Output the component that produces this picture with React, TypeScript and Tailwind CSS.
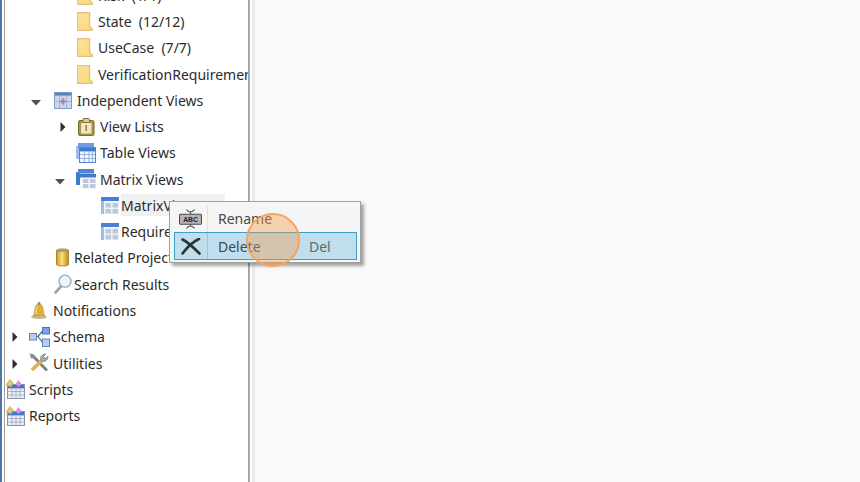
import type { ReactNode } from "react";

const FONT = "font-['Noto_Sans','Open_Sans',sans-serif]";

function Caret({ open }: { open?: boolean }) {
  return open ? (
    <svg width="10" height="6" viewBox="0 0 10 6" className="mt-[5px] shrink-0">
      <path d="M0 0H10L5 5.5Z" fill="#505050" />
    </svg>
  ) : (
    <svg width="6" height="10" viewBox="0 0 6 10" className="mt-[1px] shrink-0">
      <path d="M0.5 0L5.5 5L0.5 10Z" fill="#303030" />
    </svg>
  );
}

function Folder() {
  return (
    <svg width="16" height="19" viewBox="0 0 16 19" className="shrink-0">
      <defs>
        <linearGradient id="fold" x1="0" y1="0" x2="1" y2="1">
          <stop offset="0" stopColor="#fbe39c" />
          <stop offset="1" stopColor="#fdd876" />
        </linearGradient>
      </defs>
      <path d="M.7.7H12.6V14.5L15.3 17V18.3H.7Z" fill="url(#fold)" stroke="#e0bf86" strokeWidth="1.2" />
    </svg>
  );
}

function IndependentIcon() {
  return (
    <svg width="18" height="17" viewBox="0 0 18 17" className="shrink-0">
      <rect x=".5" y=".5" width="17" height="16" fill="#c9d8ef" stroke="#7f9dc9" />
      <rect x="1" y="1" width="16" height="2.6" fill="#5a82bf" />
      <path d="M1 9.5H17M5.5 4V16M12.5 4V16" stroke="#a1b6d8" />
      <circle cx="9" cy="9.5" r="2.4" fill="#c98a95" />
      <path d="M9 5.5V13.5M5 9.5H13" stroke="#b0717e" strokeWidth=".7" />
    </svg>
  );
}

function ViewListsIcon() {
  return (
    <svg width="17" height="18" viewBox="0 0 17 18" className="shrink-0">
      <rect x=".5" y="2.5" width="15.5" height="15" rx="1.5" fill="#a8924a" stroke="#7a6a30" />
      <rect x="3" y="5" width="10.5" height="10.5" fill="#efe8c8" />
      <rect x="5" y=".5" width="6.5" height="4" rx="1" fill="#ddd0a0" stroke="#7a6a30" />
      <path d="M8.2 7V13" stroke="#8b7331" strokeWidth="1.4" />
    </svg>
  );
}

function TableIcon() {
  return (
    <svg width="20" height="20" viewBox="0 0 20 20" className="shrink-0">
      <rect x="0" y="3" width="14" height="13" fill="#9dbcec" />
      <rect x="2" y="0" width="16" height="5" fill="#6f9ce0" />
      <rect x="3.5" y="4.5" width="16" height="15" fill="#f0f4fb" stroke="#4f86d6" />
      <rect x="4" y="5" width="15" height="3.4" fill="#3f78cf" />
      <path d="M4 11.5H19M4 15.5H19M8.5 8V19M13 8V19M16.5 8V19" stroke="#9db4dc" />
    </svg>
  );
}

function MatrixStackIcon() {
  return (
    <svg width="20" height="20" viewBox="0 0 20 20" className="shrink-0">
      <rect x="0" y="3" width="14" height="13" fill="#3f78cf" />
      <rect x="2" y="0" width="16" height="5" fill="#4d84d8" />
      <rect x="4" y="4.5" width="16" height="15.5" fill="#f4f6fa" />
      <rect x="4" y="5" width="16" height="3.5" fill="#3f78cf" />
      <rect x="7" y="10" width="5.5" height="4" fill="#bcc9dd" />
      <rect x="14" y="10" width="5.5" height="4" fill="#bcc9dd" />
      <rect x="7" y="15" width="5.5" height="4" fill="#bcc9dd" />
      <rect x="14" y="15" width="5.5" height="4" fill="#bcc9dd" />
    </svg>
  );
}

function MatrixIcon() {
  return (
    <svg width="18" height="17" viewBox="0 0 18 17" className="shrink-0">
      <rect width="18" height="17" fill="#eef2f9" />
      <rect width="18" height="4" fill="#4a80d2" />
      <rect y="4" width="3" height="13" fill="#9dbcec" />
      <rect x="4.5" y="6" width="5.5" height="4.5" fill="#bcc9dd" />
      <rect x="11.5" y="6" width="5.5" height="4.5" fill="#bcc9dd" />
      <rect x="4.5" y="12" width="5.5" height="4.5" fill="#bcc9dd" />
      <rect x="11.5" y="12" width="5.5" height="4.5" fill="#bcc9dd" />
    </svg>
  );
}

function CylinderIcon() {
  return (
    <svg width="13" height="19" viewBox="0 0 13 19" className="shrink-0">
      <defs>
        <linearGradient id="cyl" x1="0" y1="0" x2="1" y2="0">
          <stop offset="0" stopColor="#cf9a22" />
          <stop offset=".45" stopColor="#f8e07c" />
          <stop offset="1" stopColor="#c28a18" />
        </linearGradient>
      </defs>
      <path d="M.5 2.5C.5.5 12.5.5 12.5 2.5V16.5C12.5 18.5.5 18.5.5 16.5Z" fill="url(#cyl)" stroke="#b08428" />
      <ellipse cx="6.5" cy="2.4" rx="5.5" ry="1.5" fill="#a09f8c" />
    </svg>
  );
}

function SearchIcon() {
  return (
    <svg width="18" height="20" viewBox="0 0 18 20" className="shrink-0">
      <path d="M1.5 18.5L7 12.5" stroke="#a3a3a3" strokeWidth="2.6" strokeLinecap="round" />
      <circle cx="11" cy="7.2" r="6" fill="#eef6fc" stroke="#94abbd" strokeWidth="1.3" />
    </svg>
  );
}

function BellIcon() {
  return (
    <svg width="16" height="17" viewBox="0 0 16 17" className="shrink-0">
      <ellipse cx="8" cy="15" rx="8" ry="2" fill="#c8bea6" />
      <path d="M2 14C4 11.5 3.6 8.5 4 6C4.5 3.2 6 2 8 2C10 2 11.5 3.2 12 6C12.4 8.5 12 11.5 14 14Z" fill="#e4ad36" stroke="#b98a2e" strokeWidth=".6" />
      <path d="M6 4.5C5.2 6.5 5.6 9.5 4.8 12" stroke="#f6dc8c" strokeWidth="1.2" fill="none" />
      <circle cx="8" cy="1.5" r="1.4" fill="#b98a2e" />
    </svg>
  );
}

function SchemaIcon() {
  return (
    <svg width="21" height="20" viewBox="0 0 21 20" className="shrink-0">
      <path d="M7 9.5H9L14 3.5M9 9.5L14 16" stroke="#55585e" fill="none" strokeWidth="1.2" />
      <rect x=".5" y="6.5" width="7" height="6.5" fill="#b9cdeb" stroke="#5f86c2" />
      <rect x="13.5" y=".5" width="7" height="6.5" fill="#7ea3db" stroke="#3f78cf" />
      <rect x="13.5" y="12" width="7" height="7.5" fill="#b9cdeb" stroke="#5f86c2" />
    </svg>
  );
}

function ToolsIcon() {
  return (
    <svg width="20" height="20" viewBox="0 0 20 20" className="shrink-0">
      <path d="M3 2L18 17.5" stroke="#7c7f84" strokeWidth="2.8" />
      <path d="M.5.5L5 1.5L5.5 5L2 5.5Z" fill="#8d9197" />
      <path d="M16 4.5L3 17" stroke="#dcb24f" strokeWidth="3.8" />
      <path d="M11.5 6.5C11 3 14 .5 17 1L14.5 3.5L16.5 5.5L19 3C19.5 6 17 9 13.5 8.5Z" fill="#a3a9af" stroke="#6f7378" strokeWidth=".6" />
    </svg>
  );
}

function ReportIcon() {
  return (
    <svg width="19" height="20" viewBox="0 0 19 20" className="shrink-0">
      <rect x="1.5" y="5.5" width="17" height="14" fill="#eceff6" stroke="#8a93a8" />
      <rect x="2" y="6" width="16" height="3.4" fill="#3f78cf" />
      <path d="M2 12.5H18M2 16H18M6 9.4V19M10 9.4V19M14 9.4V19" stroke="#a9b2c6" />
      <path d="M0 6L4 0.5L7.5 4L5 8Z" fill="#e8c860" stroke="#b09545" strokeWidth=".5" />
      <path d="M9.5 5L12.5 1L15.5 5L12.5 8Z" fill="#e58be0" />
    </svg>
  );
}

function RenameIcon() {
  return (
    <svg width="23" height="22" viewBox="0 0 22 21">
      <rect x=".5" y="6" width="21" height="9.5" rx="1" fill="#b4b4b4" stroke="#4c4c4c" />
      <path d="M7 1.5L9.5 3.5H12.5L15 1.5M7 19.5L9.5 17.5H12.5L15 19.5M11 3.5V6M11 15.5V17.5" stroke="#4c4c4c" fill="none" />
      <text x="11" y="13.3" textAnchor="middle" fontSize="6.5" fontWeight="700" fill="#222" fontFamily="Liberation Sans, sans-serif">ABC</text>
    </svg>
  );
}

function DeleteIcon() {
  return (
    <svg width="20" height="17" viewBox="0 0 20 17">
      <path d="M1.5 1.5C7 4 13 10 18.5 15.5" stroke="#2f3133" strokeWidth="2.6" fill="none" strokeLinecap="round" />
      <path d="M18 1C12 3.5 6 9.5 1.5 15.5" stroke="#2f3133" strokeWidth="2.6" fill="none" strokeLinecap="round" />
    </svg>
  );
}

// start: left edge of the row's first item, slot: caret column up to the icon, gap: icon to label
type Row = {
  start: string;
  caret?: "open" | "closed";
  slot?: string;
  icon: ReactNode;
  gap: string;
  label: string;
  hover?: boolean;
};

const rows: Row[] = [
  { start: "pl-[77px]", icon: <Folder />, gap: "ml-[5px]", label: "Risk  (1/1)" },
  { start: "pl-[77px]", icon: <Folder />, gap: "ml-[5px]", label: "State  (12/12)" },
  { start: "pl-[77px]", icon: <Folder />, gap: "ml-[5px]", label: "UseCase  (7/7)" },
  { start: "pl-[77px]", icon: <Folder />, gap: "ml-[5px]", label: "VerificationRequirement  (3/3)" },
  { start: "pl-[31px]", caret: "open", slot: "w-[23px]", icon: <IndependentIcon />, gap: "ml-[5px]", label: "Independent Views" },
  { start: "pl-[60px]", caret: "closed", slot: "w-[18px]", icon: <ViewListsIcon />, gap: "ml-[5px]", label: "View Lists" },
  { start: "pl-[76px]", icon: <TableIcon />, gap: "ml-[4px]", label: "Table Views" },
  { start: "pl-[55px]", caret: "open", slot: "w-[21px]", icon: <MatrixStackIcon />, gap: "ml-[4px]", label: "Matrix Views" },
  { start: "pl-[101px]", icon: <MatrixIcon />, gap: "ml-[2px]", label: "MatrixView1", hover: true },
  { start: "pl-[101px]", icon: <MatrixIcon />, gap: "ml-[2px]", label: "Requirements" },
  { start: "pl-[56px]", icon: <CylinderIcon />, gap: "ml-[5px]", label: "Related Projects" },
  { start: "pl-[54px]", icon: <SearchIcon />, gap: "ml-[2px]", label: "Search Results" },
  { start: "pl-[31px]", icon: <BellIcon />, gap: "ml-[6px]", label: "Notifications" },
  { start: "pl-[12px]", caret: "closed", slot: "w-[17px]", icon: <SchemaIcon />, gap: "ml-[3px]", label: "Schema" },
  { start: "pl-[12px]", caret: "closed", slot: "w-[17px]", icon: <ToolsIcon />, gap: "ml-[4px]", label: "Utilities" },
  { start: "pl-[6px]", icon: <ReportIcon />, gap: "ml-[4px]", label: "Scripts" },
  { start: "pl-[6px]", icon: <ReportIcon />, gap: "ml-[4px]", label: "Reports" },
];

function TreeRow({ row }: { row: Row }) {
  return (
    <div className={`flex h-[26.27px] items-center whitespace-pre text-[14px] text-[#2b2b2b] ${row.start}`}>
      {row.caret && (
        <span className={`flex shrink-0 ${row.slot}`}>
          <Caret open={row.caret === "open"} />
        </span>
      )}
      {row.icon}
      <span className={`${row.gap} ${row.hover ? "flex h-[22px] w-[104px] items-center bg-[#f0f0f0]" : ""}`}>{row.label}</span>
    </div>
  );
}

function ContextMenu() {
  return (
    <div className="absolute left-[169px] top-[201px] w-[192px] border border-[#a0a0a0] bg-[#f5f5f5] px-[4px] pb-[2px] pt-[3px] shadow-[3px_3px_3px_rgba(0,0,0,0.35)]">
      <div className="flex h-[27px] items-center text-[14px] text-[#4a4a4a]">
        <span className="flex w-[34px] items-center justify-center self-stretch border-r border-[#e2e2e2]">
          <RenameIcon />
        </span>
        <span className="pl-[10px]">Rename</span>
      </div>
      <div className="flex h-[28px] w-[183px] items-center border border-[#3f9fc0] bg-[#bfdfee] text-[14px] text-[#3c4a52]">
        <span className="flex w-[33px] items-center justify-center self-stretch border-r border-[#a4c4d4]">
          <DeleteIcon />
        </span>
        <span className="w-[101px] pl-[10px]">Delete</span>
        <span className="text-[#5e6a70]">Del</span>
      </div>
    </div>
  );
}

export default function App() {
  return (
    <div className={`relative flex h-[482px] w-[860px] overflow-hidden bg-white ${FONT}`}>
      <div className="flex w-[5px] shrink-0">
        <div className="w-[2px] bg-[#4a78ab]" />
        <div className="w-[2px] bg-white" />
        <div className="w-px bg-[#a0a0a0]" />
      </div>
      <div className="w-[243px] shrink-0 overflow-hidden">
        <div className="-ml-[5px] -mt-[17.8px]">
          {rows.map((r) => (
            <TreeRow key={r.label} row={r} />
          ))}
        </div>
      </div>
      <div className="w-[2px] shrink-0 bg-[#a9a9a9]" />
      <div className="w-[2px] shrink-0 bg-white" />
      <div className="w-[3px] shrink-0 bg-[#ececec]" />
      <div className="flex-1 bg-[#f9f9f9]" />
      <ContextMenu />
      <div className="absolute left-[246px] top-[212.5px] h-[54px] w-[54px] rounded-full border-2 border-[#f5a45c] bg-[#f59a4a]/40" />
    </div>
  );
}
